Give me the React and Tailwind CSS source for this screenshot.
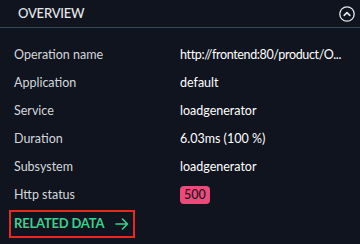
import React from 'react';

const rows = [
  { label: 'Operation name', value: 'http://frontend:80/product/O...', tight: true },
  { label: 'Application', value: 'default' },
  { label: 'Service', value: 'loadgenerator' },
  { label: 'Duration', value: '6.03ms (100 %)' },
  { label: 'Subsystem', value: 'loadgenerator' },
];

export default function App() {
  return (
    <div className="w-[360px] h-[244px] bg-[#0f141e] overflow-hidden" style={{ fontFamily: 'Lato, "Noto Sans", sans-serif' }}>
      {/* Header */}
      <div className="h-[28px] flex items-center justify-between pl-[18px] pr-[5px] border-b border-[#34475f]">
        <span className="text-[13px] font-medium text-[#e6e8ec] tracking-[-0.2px]">OVERVIEW</span>
        <svg width="16" height="16" viewBox="0 0 16 16" fill="none">
          <circle cx="8" cy="8" r="7.2" stroke="#e6e8ec" strokeWidth="1.3" />
          <path d="M5.2 9.4 L8 6.6 L10.8 9.4" stroke="#e6e8ec" strokeWidth="1.6" strokeLinecap="round" strokeLinejoin="round" />
        </svg>
      </div>

      {/* Rows */}
      <div className="pt-[13px] pl-[14px] flex flex-col">
        {rows.map((r) => (
          <div key={r.label} className="h-[28px] flex items-center text-[12.5px]">
            <span className="w-[166px] shrink-0 text-[#d4d7dd]">{r.label}</span>
            <span className={r.tight ? 'text-white whitespace-nowrap tracking-[-0.35px]' : 'text-white whitespace-nowrap'}>{r.value}</span>
          </div>
        ))}
        <div className="h-[28px] flex items-center text-[12.5px]">
          <span className="w-[166px] text-[#d4d7dd]">Http status</span>
          <span className="h-[18px] px-[4px] rounded-[4px] bg-[#ec4a7b] text-[#1a1420] font-medium flex items-center">500</span>
        </div>
      </div>

      {/* Related data */}
      <div className="ml-[9px] mt-[1px] w-[126px] h-[28px] border-2 border-[#e8281e] flex items-center pl-[3px] gap-[11px]">
        <span className="text-[13px] font-bold text-[#3ecf8e] tracking-[-0.2px]">RELATED DATA</span>
        <svg width="14" height="12" viewBox="0 0 14 12" fill="none">
          <path d="M1 6 H12.5 M7.5 1 L12.5 6 L7.5 11" stroke="#3ecf8e" strokeWidth="1.6" strokeLinecap="round" strokeLinejoin="round" />
        </svg>
      </div>
    </div>
  );
}
